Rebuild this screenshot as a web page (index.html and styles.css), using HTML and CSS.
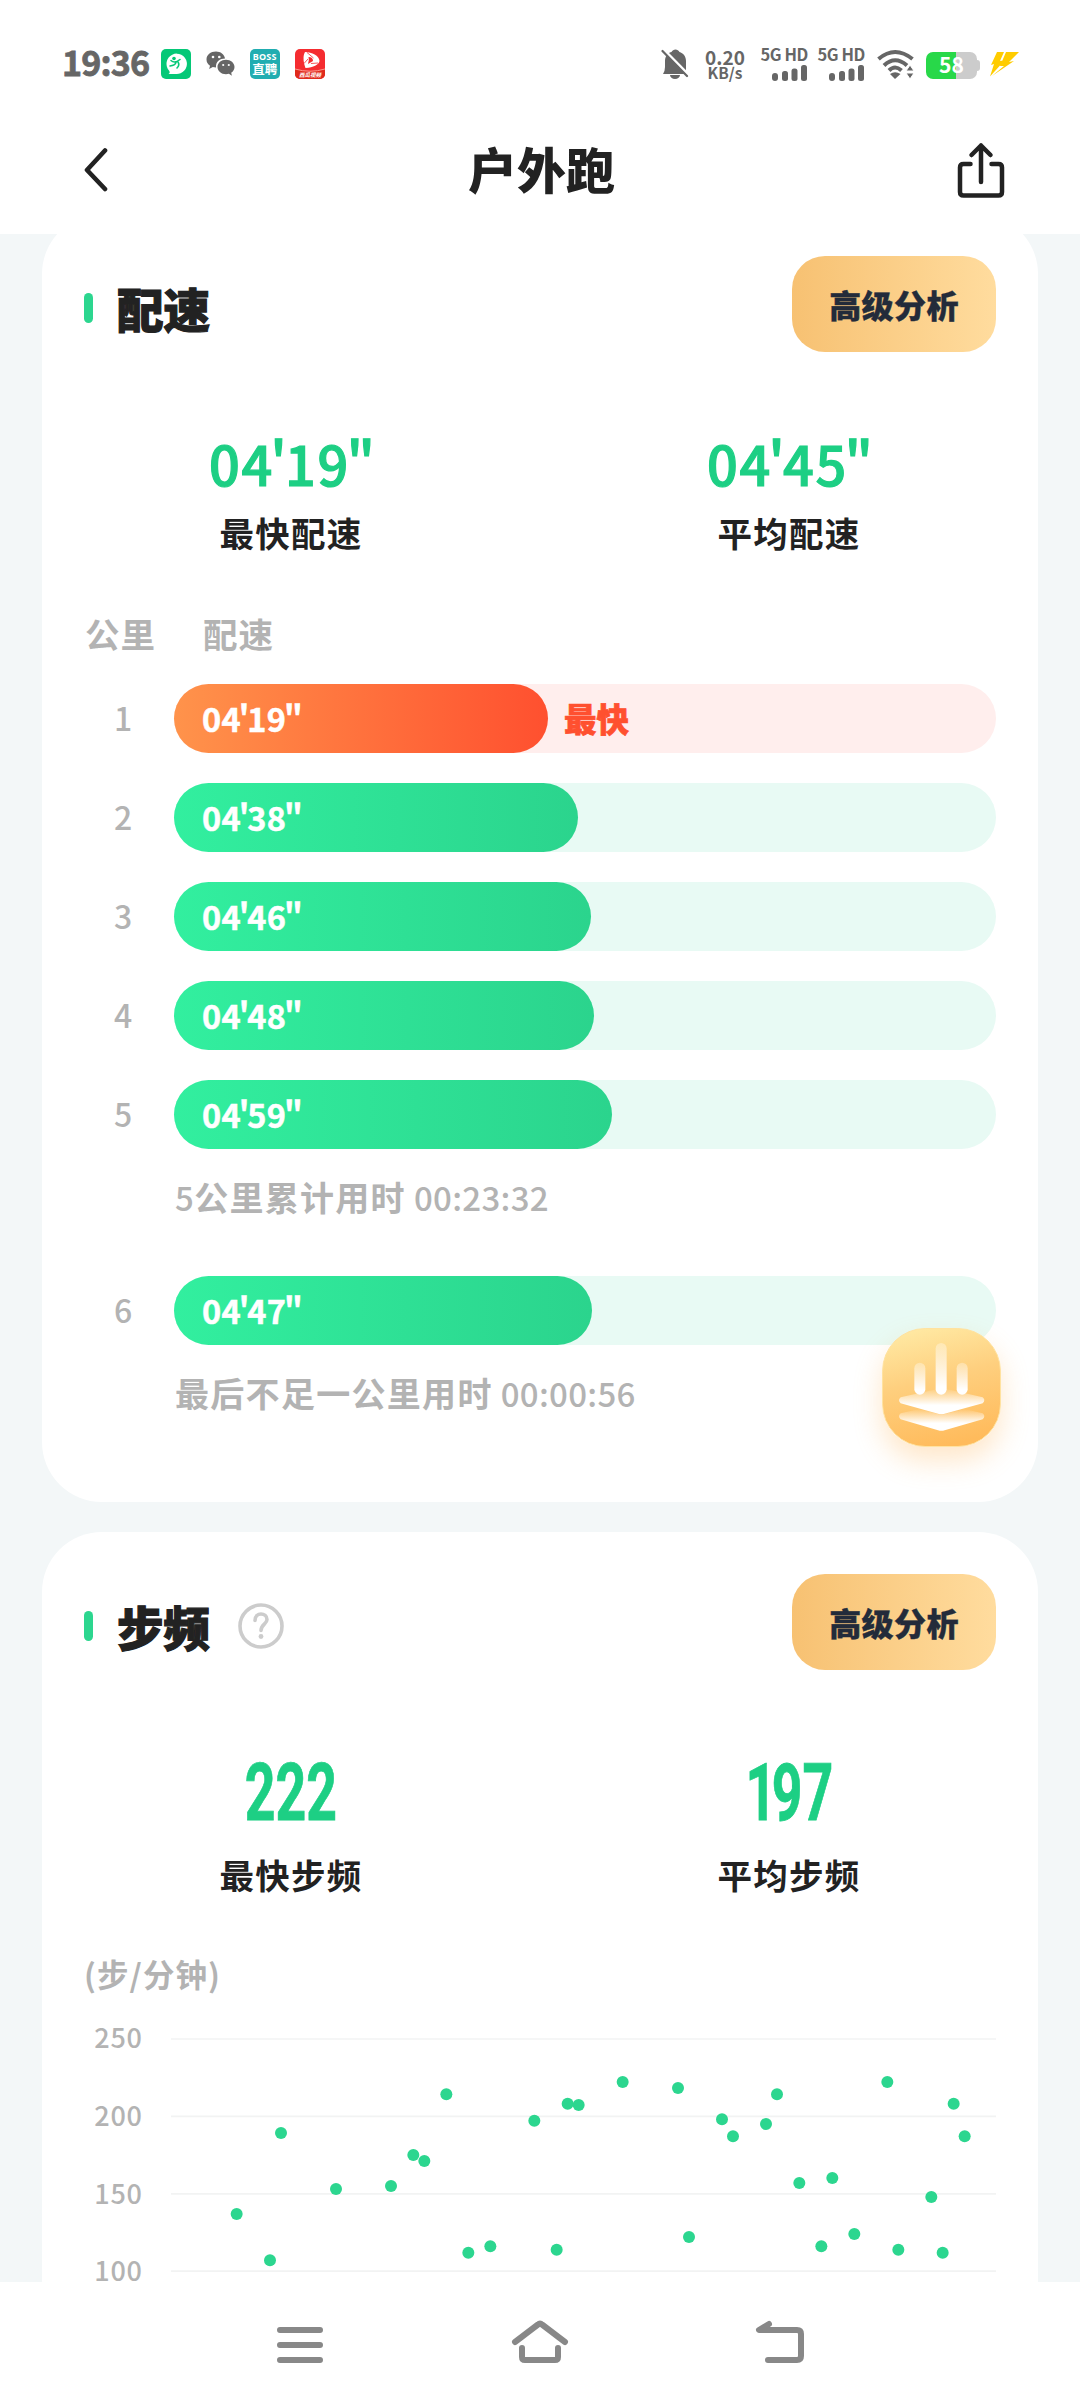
FILE: index.html
```html
<!DOCTYPE html>
<html lang="zh-CN">
<head>
<meta charset="utf-8">
<title>户外跑</title>
<link rel="stylesheet" href="styles.css">
</head>
<body>
<div class="screen">
  <header class="status">
    <span class="clock">19:36</span>
    <div class="apps">
      <svg width="30" height="30" viewBox="0 0 30 30"><rect width="30" height="30" rx="5" fill="#05c877"/><path d="M7.500 25c1.500-1 1.500-2 .5-3.500A10.200 10.200 0 1 1 15 25Z" fill="#fff"/><path d="M10 11.500q3.500 3.500 9-1M15 13.500q-1 3-6 3.500M17 13q2 3-1 6" fill="none" stroke="#05c877" stroke-width="1.600" stroke-linecap="round"/><circle cx="13" cy="9.500" r="1.800" fill="#05c877"/></svg>
      <svg width="29" height="26" viewBox="0 0 29 26"><path d="M10 .5C4.500.5.500 4 .5 8.500c0 2.700 1.300 4.800 3.500 6.300L3.200 18l3.600-2c1 .3 2 .5 3.200.5C9.500 10.500 14 7.500 19 7.500 18.500 3.300 14.500.5 10 .5Z" fill="#666"/><path d="M20 8.800c-4.800 0-8.500 3.200-8.500 7.200s3.700 7.200 8.500 7.200c1 0 2-.2 2.900-.4l3 1.900-.7-2.900c2-1.300 3.300-3.400 3.300-5.800 0-4-3.800-7.200-8.500-7.200Z" fill="#666"/><g fill="#fff"><circle cx="7" cy="6" r="1.300"/><circle cx="13.300" cy="6" r="1.300"/><circle cx="17.200" cy="14" r="1.100"/><circle cx="22.800" cy="14" r="1.100"/></g></svg>
      <span class="boss"><b>BOSS</b><i>直聘</i></span>
      <svg width="30" height="30" viewBox="0 0 30 30"><rect width="30" height="30" rx="5" fill="#f52c30"/><path d="M0 20Q15 24.500 30 20V25a5 5 0 0 1-5 5H5a5 5 0 0 1-5-5Z" fill="#e02a1c"/><path d="M0 20Q15 24.500 30 20" fill="none" stroke="#ffb3a5" stroke-width=".8"/><path d="M10 3c7 0 14 3.500 14.500 9-1 4-6 6.500-14 7-2-5-3-12-.5-16Z" fill="#fff"/><path d="M13.500 8q4.500 0 4.500 4l-5 3q1.500-4 .5-7Z" fill="#f52c30"/><path d="M12 3.500 18.500 9M23 14l-7 .500M9 14.500l4-4.500" stroke="#f52c30" stroke-width=".8"/><text x="15" y="27.500" text-anchor="middle" class="tiny">西瓜视频</text></svg>
    </div>
    <div class="signals">
      <svg class="bell" width="28" height="32" viewBox="0 0 28 32"><path d="M2 26q2-3 2-7v-6C4 7 8 4.500 10.500 4 12 .5 17 .5 18.500 4 22 5 25 8 25 13v13Z" fill="#666"/><path d="M9 27h10a5 4 0 0 1-10 0Z" fill="#666"/><path d="M2 1 28 27.500" stroke="#fff" stroke-width="3"/><path d="M1.500 3 26 28" stroke="#666" stroke-width="2.200" stroke-linecap="round"/></svg>
      <span class="rate"><b>0.20</b><b class="unit">KB/s</b></span>
      <span class="cell"><b>5G HD</b><svg width="36" height="16" viewBox="0 0 36 16"><g fill="#666"><rect y="8" width="6" height="8" rx="3"/><rect x="10" y="6" width="6" height="10" rx="2.500"/><rect x="19.500" y="3.500" width="6" height="12.500" rx="2.500"/><rect x="29" width="6" height="16" rx="2.500"/></g></svg></span>
      <span class="cell"><b>5G HD</b><svg width="36" height="16" viewBox="0 0 36 16"><g fill="#666"><rect y="8" width="6" height="8" rx="3"/><rect x="10" y="6" width="6" height="10" rx="2.500"/><rect x="19.500" y="3.500" width="6" height="12.500" rx="2.500"/><rect x="29" width="6" height="16" rx="2.500"/></g></svg></span>
      <svg class="wifi" width="38" height="30" viewBox="0 0 38 30"><g fill="none" stroke="#666" stroke-width="4"><path d="M1.500 10Q18 -4 35.500 10"/><path d="M7 16.500Q18 6 30 16.500"/><path d="M12 21.500Q18 15.500 24.500 21.500"/></g><path d="M13 25q5-3.500 10.500 0L18 30Z" fill="#666"/><path d="M29 22h8l-4-6ZM29 24h8l-4 6Z" fill="#666" stroke="#fff" stroke-width="1"/></svg>
      <span class="battery">58</span>
      <svg class="bolt" width="31" height="25" viewBox="0 0 31 25"><path d="M8 0H15L11 9 16 8 1 24.500 5 12 2 13ZM17 0H30L20 10l5-1L3 24 15 14l-4 0Z" fill="#fc0"/></svg>
    </div>
  </header>
  <div class="titlebar">
    <svg width="26" height="44" viewBox="0 0 26 44"><path d="M22 2.500 4 22 22 41" fill="none" stroke="#222" stroke-width="4.600" stroke-linecap="round" stroke-linejoin="round"/></svg>
    <h1>户外跑</h1>
    <svg width="48" height="56" viewBox="0 0 48 56"><path d="M13.500 22H6.500Q3 22 3 25.500V50Q3 53.500 6.500 53.500H41.500Q45 53.500 45 50V25.500Q45 22 41.500 22H34.500M24 40V3.500M14.500 13 24 3.500 33.500 13" fill="none" stroke="#222" stroke-width="4.500" stroke-linecap="round" stroke-linejoin="round"/></svg>
  </div>

  <main class="scroll">
    <section class="card card-pace">
      <div class="head"><i class="tick"></i><h2>配速</h2><button class="pro">高级分析</button></div>
      <div class="stats">
        <div><strong class="pace-num">04<i class="q">'</i>19<i class="q">"</i></strong><span>最快配速</span></div>
        <div><strong class="pace-num">04<i class="q">'</i>45<i class="q">"</i></strong><span>平均配速</span></div>
      </div>
      <div class="cols"><span>公里</span><span>配速</span></div>
      <div class="rows">
        <div class="row"><span class="km">1</span><div class="track hot"><div class="bar" style="width:374px">04<i class="q">'</i>19<i class="q">"</i></div><em>最快</em></div></div>
        <div class="row"><span class="km">2</span><div class="track"><div class="bar" style="width:404px">04<i class="q">'</i>38<i class="q">"</i></div></div></div>
        <div class="row"><span class="km">3</span><div class="track"><div class="bar" style="width:417px">04<i class="q">'</i>46<i class="q">"</i></div></div></div>
        <div class="row"><span class="km">4</span><div class="track"><div class="bar" style="width:420px">04<i class="q">'</i>48<i class="q">"</i></div></div></div>
        <div class="row"><span class="km">5</span><div class="track"><div class="bar" style="width:438px">04<i class="q">'</i>59<i class="q">"</i></div></div></div>
      </div>
      <p class="note"><span class="lead">5</span>公里累计用时 <span>00:23:32</span></p>
      <div class="row last"><span class="km">6</span><div class="track"><div class="bar" style="width:418px">04<i class="q">'</i>47<i class="q">"</i></div></div></div>
      <p class="note">最后不足一公里用时 <span>00:00:56</span></p>
    </section>

    <section class="card card-cadence">
      <div class="head"><i class="tick"></i><h2>步频</h2>
        <svg class="help" width="46" height="46" viewBox="0 0 46 46"><g fill="none" stroke="#ccc" stroke-width="3.600" stroke-linecap="round"><circle cx="23" cy="23" r="21"/><path d="M17 17.500C17 8.500 29 9.500 29 16.500 29 21 23 21.500 23 27.500"/></g><circle cx="23" cy="33.500" r="2.400" fill="#ccc"/></svg>
        <button class="pro">高级分析</button></div>
      <div class="stats">
        <div><strong class="cad-num">222</strong><span>最快步频</span></div>
        <div><strong class="cad-num"><i class="one">1</i>97</strong><span>平均步频</span></div>
      </div>
      <p class="axis">(步/分钟)</p>
      <svg class="chart" width="912" height="262" viewBox="72 240 2736 786">
        <path d="M333 297H2808M333 529H2808M333 761.500H2808M333 993.500H2808" stroke="#f2f3f3" stroke-width="5"/>
        <g class="ticks"><text x="103" y="325">250</text><text x="103" y="559">200</text><text x="103" y="791">150</text><text x="103" y="1022">100</text></g>
        <g fill="#2cd68f">
          <circle cx="530" cy="822" r="18"/><circle cx="630" cy="961" r="18"/><circle cx="663" cy="579" r="18"/><circle cx="828" cy="747" r="18"/><circle cx="993" cy="738" r="18"/><circle cx="1060" cy="645" r="18"/><circle cx="1093" cy="663" r="18"/><circle cx="1159" cy="463" r="18"/><circle cx="1225" cy="938" r="18"/><circle cx="1291" cy="919" r="18"/><circle cx="1423" cy="542" r="18"/><circle cx="1490" cy="929" r="18"/><circle cx="1523" cy="491" r="18"/><circle cx="1556" cy="495" r="18"/><circle cx="1688" cy="426" r="18"/><circle cx="1854" cy="444" r="18"/><circle cx="1887" cy="891" r="18"/><circle cx="1986" cy="538" r="18"/><circle cx="2019" cy="589" r="18"/><circle cx="2118" cy="552" r="18"/><circle cx="2151" cy="463" r="18"/><circle cx="2218" cy="729" r="18"/><circle cx="2284" cy="919" r="18"/><circle cx="2317" cy="714" r="18"/><circle cx="2383" cy="882" r="18"/><circle cx="2482" cy="426" r="18"/><circle cx="2515" cy="929" r="18"/><circle cx="2614" cy="771" r="18"/><circle cx="2648" cy="938" r="18"/><circle cx="2681" cy="491" r="18"/><circle cx="2714" cy="589" r="18"/>
        </g>
      </svg>
    </section>

    <div class="fab">
      <svg width="119" height="119" viewBox="0 0 357 357">
        <defs>
          <linearGradient id="fabBg" x1=".25" y1="0" x2=".5" y2="1"><stop offset="0" stop-color="#ffe9a3"/><stop offset=".45" stop-color="#fecf7e"/><stop offset="1" stop-color="#ffbb5c"/></linearGradient>
          <linearGradient id="fade" x1="0" y1="0" x2="0" y2="1"><stop offset="0" stop-color="#fff" stop-opacity=".3"/><stop offset=".85" stop-color="#fff"/></linearGradient>
          <linearGradient id="sheet" x1="0" y1="0" x2="0" y2="1"><stop offset="0" stop-color="#fff" stop-opacity="0"/><stop offset=".65" stop-color="#fff"/></linearGradient>
        </defs>
        <rect x="1.500" y="1.500" width="354" height="354" rx="128" fill="url(#fabBg)" stroke="#ffe2a0" stroke-width="3"/>
        <g fill="url(#fade)"><rect x="97" y="104" width="33" height="96" rx="16.500"/><rect x="161" y="45" width="33" height="155" rx="16.500"/><rect x="224" y="104" width="33" height="96" rx="16.500"/></g>
        <path d="M56 208 170 182q10-2 20 0L302 208q10 8 0 18L188 257q-10 3-20 0L56 226q-10-10 0-18Z" fill="url(#sheet)"/>
        <path d="M56 256 112 243 168 258q10 3 20 0L246 243 302 256q10 8 0 18L188 307q-10 3-20 0L56 274q-10-10 0-18Z" fill="url(#sheet)"/>
      </svg>
    </div>
  </main>

  <nav class="nav">
    <svg width="60" height="50" viewBox="0 0 60 50"><path d="M10 10H50M10 25H50M10 40H50"/></svg>
    <svg width="60" height="50" viewBox="0 0 60 50"><path d="M5 22 28 4.500Q30 2.500 32 4.500L55 22M12 28V37Q12 40 15 40H45Q48 40 48 37V28"/></svg>
    <svg width="60" height="50" viewBox="0 0 60 50"><path d="M19 4 9 10H47Q51 10 51 14V36Q51 40 47 40H18"/></svg>
  </nav>
</div>
</body>
</html>
```
FILE: styles.css
```css
* { box-sizing: border-box; margin: 0; padding: 0; }
body { width: 1080px; height: 2408px; overflow: hidden; background: #fff; font-family: "Noto Sans CJK SC", "Noto Sans", sans-serif; color: #222; }
svg { display: block; flex: none; }
i, em { font-style: normal; }
.screen { display: flex; flex-direction: column; width: 1080px; height: 2408px; }

.status { display: flex; align-items: center; height: 104px; padding: 24px 60px 0 62px; color: #666; }
.clock { font-size: 34px; font-weight: 700; letter-spacing: -.8px; line-height: 40px; width: 99px; margin-top: -5px; white-space: nowrap; -webkit-text-stroke: .8px #666; }
.apps { display: flex; align-items: center; gap: 15px; width: 190px; }
.boss { display: flex; flex-direction: column; align-items: center; width: 30px; height: 30px; border-radius: 5px; background: #21adb1; color: #fff; padding-top: 3px; }
.boss b { font: 700 9px/10px "Noto Sans", sans-serif; letter-spacing: .2px; }
.boss i { font-size: 12.5px; line-height: 14px; font-weight: 700; }
.tiny { font: italic 700 5.500px "Noto Sans CJK SC", sans-serif; fill: #fff; }
.signals { display: flex; align-items: center; margin-left: 311px; height: 34px; flex: none; }
.rate { display: flex; flex-direction: column; align-items: center; width: 40px; margin-left: 16px; }
.rate b { font-size: 19px; line-height: 16px; font-weight: 700; }
.rate b.unit { font-size: 15.5px; line-height: 15px; }
.cell { display: flex; flex-direction: column; align-items: flex-end; width: 48px; margin-left: 15px; gap: 3px; }
.cell + .cell { margin-left: 9px; }
.cell b { font-size: 16.5px; line-height: 15px; font-weight: 700; letter-spacing: -.4px; white-space: nowrap; }
.wifi { margin-left: 12px; }
.battery { width: 51px; height: 27px; margin: 2px 3px 0 11px; border-radius: 7px; background: linear-gradient(90deg, #28d849 30px, #ccc 30px); color: #fff; font-size: 21px; line-height: 25px; font-weight: 700; text-align: center; position: relative; }
.battery::after { content: ""; position: absolute; right: -3px; top: 8px; width: 4px; height: 11px; border-radius: 0 3px 3px 0; background: #ccc; }
.bolt { margin-left: 9px; }

.titlebar { display: flex; align-items: center; justify-content: space-between; height: 130px; padding: 2px 75px 0 83px; }
.titlebar h1 { font-size: 49px; line-height: 60px; font-weight: 900; margin: -5px 0 0 17px; }

.scroll { position: relative; flex: none; height: 2048px; overflow: hidden; background: #f3f7f8; }
.card { margin: 0 42px; padding: 42px 42px 0; background: #fff; border-radius: 60px; }
.card-pace { margin-top: -20px; height: 1288px; }
.card-cadence { margin-top: 30px; height: 900px; }
.head { display: flex; align-items: center; height: 96px; }
.tick { width: 9px; height: 30px; border-radius: 5px; background: #2cd68f; margin-top: 8px; }
.head h2 { margin: 8px 0 0 24px; font-size: 46.5px; line-height: 60px; font-weight: 900; -webkit-text-stroke: 1.2px #222; }
.help { margin: 8px 0 0 28px; }
.pro { margin-left: auto; width: 204px; height: 96px; border: 0; border-radius: 33px; background: linear-gradient(90deg, #f7c172, #ffdc9e); color: #232b3a; font: 900 32px/96px "Noto Sans CJK SC", sans-serif; letter-spacing: .4px; -webkit-text-stroke: .4px #232b3a; }

.stats { display: grid; grid-template-columns: 1fr 1fr; margin: 75px -42px 0; text-align: center; }
.stats div { display: flex; flex-direction: column; align-items: center; }
.stats strong { height: 80px; line-height: 72px; color: #1dcf84; }
.pace-num { font-size: 54px; font-weight: 500; letter-spacing: 1.8px; -webkit-text-stroke: 1.2px #1dcf84; }
.pace-num .q, .bar .q { margin: 0 -.065em; }
.cad-num { font-family: Roboto, sans-serif; font-size: 80px; font-weight: 700; transform: scaleX(.67); -webkit-text-stroke: .8px #1dcf84; }
.one { letter-spacing: -7px; }
.stats span { font-size: 34.5px; line-height: 50px; font-weight: 700; letter-spacing: 1.3px; }

.cols { display: flex; gap: 47px; margin-top: 51px; padding-left: 1px; height: 50px; font-size: 34.5px; line-height: 50px; font-weight: 700; letter-spacing: 1px; color: #b3b3b3; }
.rows { display: grid; gap: 30px; margin-top: 26px; }
.row { display: grid; grid-template-columns: 78px 822px; gap: 12px; height: 69px; }
.km { font-size: 32px; line-height: 67px; font-weight: 500; text-align: center; color: #b3b3b3; }
.track { display: flex; height: 69px; border-radius: 35px; background: #e8faf4; }
.bar { flex: none; height: 69px; border-radius: 35px; padding-left: 28px; background: linear-gradient(90deg, #32ef9f, #2bd48d); color: #fff; font-size: 32.5px; line-height: 67px; font-weight: 700; letter-spacing: .2px; -webkit-text-stroke: .5px #fff; }
.hot { background: #ffeeed; }
.hot .bar { background: linear-gradient(90deg, #ff934b, #ff502f); }
.hot em { margin-left: 16px; font-size: 32.5px; line-height: 68px; font-weight: 900; color: #ff502f; -webkit-text-stroke: .7px #ff502f; }
.note { margin: 24px 0 0 91px; height: 50px; font-size: 34px; line-height: 48px; font-weight: 700; letter-spacing: 1.3px; color: #b3b3b3; white-space: nowrap; }
.note span { font-weight: 500; font-size: 33px; letter-spacing: .3px; margin-left: -1px; }
.note .lead { margin-left: 0; }
.last { margin-top: 53px; }

.card-cadence .stats strong { height: 104px; line-height: 96px; }
.axis { margin-top: 49px; height: 50px; font-size: 31.5px; line-height: 50px; font-weight: 700; color: #b3b3b3; letter-spacing: 1.1px; }
.chart { margin-top: 22px; overflow: visible; }
.ticks { font-size: 81px; font-weight: 500; letter-spacing: 2px; fill: #b3b3b3; }

.fab { position: absolute; left: 882px; top: 1094px; width: 119px; height: 119px; border-radius: 43px; box-shadow: 0 14px 28px rgba(255, 180, 90, .32); }

.nav { display: flex; justify-content: center; gap: 180px; height: 126px; padding-top: 38px; position: relative; background: #fff; }
.nav path { fill: none; stroke: #888; stroke-width: 6; stroke-linecap: round; stroke-linejoin: round; }
.nav svg { overflow: visible; }
```
